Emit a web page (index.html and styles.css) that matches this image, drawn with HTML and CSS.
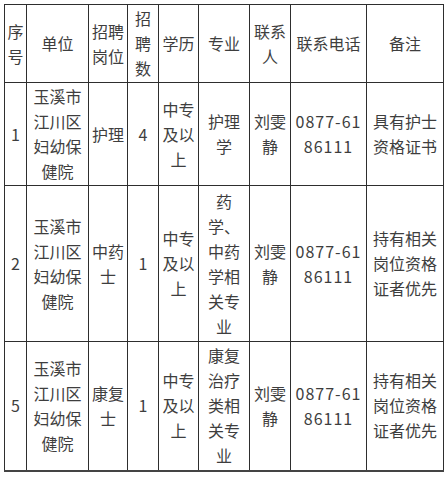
FILE: index.html
```html
<!DOCTYPE html>
<html lang="zh-CN">
<head>
<meta charset="utf-8">
<title>招聘信息</title>
<link rel="stylesheet" href="styles.css">
</head>
<body>
<table class="jobs">
  <colgroup>
    <col class="c-no">
    <col class="c-unit">
    <col class="c-post">
    <col class="c-count">
    <col class="c-edu">
    <col class="c-major">
    <col class="c-contact">
    <col class="c-phone">
    <col class="c-note">
  </colgroup>
  <thead>
    <tr class="r-head">
      <th>序号</th>
      <th>单位</th>
      <th>招聘岗位</th>
      <th>招聘数</th>
      <th>学历</th>
      <th>专业</th>
      <th>联系人</th>
      <th>联系电话</th>
      <th>备注</th>
    </tr>
  </thead>
  <tbody>
    <tr class="r-1">
      <td>1</td>
      <td>玉溪市江川区妇幼保健院</td>
      <td>护理</td>
      <td>4</td>
      <td>中专及以上</td>
      <td>护理学</td>
      <td>刘雯静</td>
      <td class="phone">0877-6186111</td>
      <td>具有护士资格证书</td>
    </tr>
    <tr class="r-2">
      <td>2</td>
      <td>玉溪市江川区妇幼保健院</td>
      <td>中药士</td>
      <td>1</td>
      <td>中专及以上</td>
      <td>药学、中药学相关专业</td>
      <td>刘雯静</td>
      <td class="phone">0877-6186111</td>
      <td>持有相关岗位资格证者优先</td>
    </tr>
    <tr class="r-3">
      <td>5</td>
      <td>玉溪市江川区妇幼保健院</td>
      <td>康复士</td>
      <td>1</td>
      <td>中专及以上</td>
      <td>康复治疗类相关专业</td>
      <td>刘雯静</td>
      <td class="phone">0877-6186111</td>
      <td>持有相关岗位资格证者优先</td>
    </tr>
  </tbody>
</table>
</body>
</html>
```

FILE: styles.css
```css
html, body {
  margin: 0;
  padding: 0;
  background: #ffffff;
}

body {
  padding: 4px;
  font-family: "Noto Sans CJK SC", "Noto Sans", sans-serif;
  font-size: 16px;
  line-height: 25px;
  color: #3e3e3e;
}

.jobs {
  border-collapse: collapse;
  table-layout: fixed;
  width: 439px;
  border-bottom: 2px solid #444;
}

.jobs th,
.jobs td {
  border: 1px solid #2e2e2e;
  padding: 1px 2px;
  text-align: center;
  vertical-align: middle;
  font-weight: 400;
  word-break: break-all;
}

.c-no { width: 22px; }
.c-unit { width: 62px; }
.c-post { width: 39px; }
.c-count { width: 31px; }
.c-edu { width: 40px; }
.c-major { width: 51px; }
.c-contact { width: 41px; }
.c-phone { width: 76px; }
.c-note { width: 77px; }

.r-head { height: 78px; }
.r-1 { height: 103px; }
.r-2 { height: 156px; }
.r-3 { height: 129px; }

.phone {
  letter-spacing: 1px;
}
```
